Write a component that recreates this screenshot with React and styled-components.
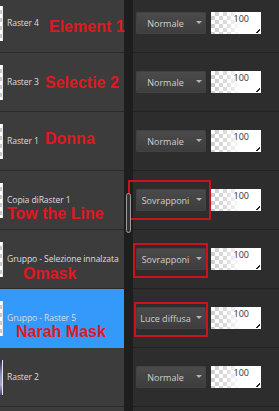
import styled, { createGlobalStyle } from "styled-components";

const GlobalStyle = createGlobalStyle`
  html, body {
    margin: 0;
    padding: 0;
    background: #2d2d2d;
  }
`;

const layers = [
  { name: "Raster 4", mode: "Normale", note: { text: "Element 1", left: 49, top: 25 } },
  { name: "Raster 3", mode: "Normale", note: { text: "Selectie 2", left: 45, top: 22 } },
  { name: "Raster 1", mode: "Normale", note: { text: "Donna", left: 45, top: 19 } },
  {
    name: "Copia diRaster 1",
    mode: "Sovrapponi",
    note: { text: "Tow the Line", left: 7, top: 35 },
    box: { left: 128, top: 9, width: 83, height: 40 },
  },
  {
    name: "Gruppo - Selezione innalzata",
    mode: "Sovrapponi",
    note: { text: "Omask", left: 23, top: 36 },
    box: { left: 133, top: 13, width: 75, height: 35 },
  },
  {
    name: "Gruppo - Raster 5",
    mode: "Luce diffusa",
    selected: true,
    note: { text: "Narah Mask", left: 16, top: 35 },
    box: { left: 134, top: 13, width: 74, height: 35 },
  },
  { name: "Raster 2", mode: "Normale", image: true },
];

const Panel = styled.div`
  position: relative;
  width: 279px;
  height: 411px;
  overflow: hidden;
  background: #2d2d2d;
`;

const List = styled.div`
  display: flex;
  flex-direction: column;
  margin-top: -6px;
`;

const Row = styled.div`
  position: relative;
  display: grid;
  grid-template-columns: 124px 9px 1fr;
  height: ${(p) => (p.$stub ? 10 : 59)}px;
`;

const NameCell = styled.div`
  display: flex;
  align-items: center;
  gap: 3px;
  background: ${(p) => (p.$selected ? "#3399fb" : "#3c3c3c")};
  border-bottom: 1px solid ${(p) => (p.$selected ? "#3399fb" : "#2a2a2a")};
  overflow: hidden;
`;

const Thumb = styled.div`
  flex: none;
  width: 3px;
  height: 35px;
  background: ${(p) =>
    p.$image
      ? "linear-gradient(180deg, #2c2a4a 0%, #8d8cc0 40%, #a9a8d4 70%, #4b4970 100%)"
      : "repeating-linear-gradient(180deg, #ffffff 0 4px, #c9c9c9 4px 8px)"};
  border-right: 1px solid #e8e8e8;
  margin-left: -1px;
`;

const LayerName = styled.span`
  font-family: "Open Sans", "Noto Sans", sans-serif;
  font-size: 8.6px;
  letter-spacing: -0.1px;
  color: #dcdcdc;
  white-space: nowrap;
  margin-left: 1px;
`;

const Gutter = styled.div`
  background: #1e1e1e;
`;

const Controls = styled.div`
  display: flex;
  align-items: center;
  gap: 5px;
  padding-left: 3px;
  background: #2d2d2d;
  border-bottom: 1px solid #222222;
`;

const Blend = styled.div`
  position: relative;
  width: 70px;
  height: 22px;
  box-sizing: border-box;
  padding-right: 11px;
  display: flex;
  align-items: center;
  justify-content: center;
  background: linear-gradient(180deg, #4b4b4b 0%, #444444 50%, #3d3d3d 100%);
  border-radius: 2px;
  box-shadow: inset 0 0 0 1px #424242;
  font-family: "Open Sans", "Noto Sans", sans-serif;
  font-size: 9px;
  color: #cfcfcf;
  white-space: nowrap;
`;

const Caret = styled.span`
  position: absolute;
  right: 4px;
  top: 9px;
  width: 0;
  height: 0;
  border-left: 3px solid transparent;
  border-right: 3px solid transparent;
  border-top: 3px solid #b5b5b5;
`;

const Opacity = styled.div`
  position: relative;
  width: 50px;
  height: 22px;
  box-sizing: border-box;
  padding: 2px 12px 0 0;
  text-align: right;
  background:
    linear-gradient(90deg, rgba(255, 255, 255, 0) 0%, rgba(255, 255, 255, 0.3) 30%, #ffffff 60%),
    repeating-conic-gradient(#cdcdcd 0 25%, #ffffff 0 50%) 0 0 / 8px 8px;
  font-family: "Open Sans", "Noto Sans", sans-serif;
  font-size: 9px;
  line-height: 10px;
  color: #333333;
`;

const Grip = styled.span`
  position: absolute;
  right: 1px;
  bottom: 1px;
  width: 4px;
  height: 4px;
  background: linear-gradient(135deg, transparent 45%, #222 45%, #222 65%, transparent 65%);
`;

const Note = styled.span`
  position: absolute;
  left: ${(p) => p.$left}px;
  top: ${(p) => p.$top}px;
  font-family: "Liberation Sans", Arial, sans-serif;
  font-weight: bold;
  font-size: 16px;
  line-height: 16px;
  color: #e01820;
  white-space: nowrap;
`;

const Frame = styled.div`
  position: absolute;
  left: ${(p) => p.$left}px;
  top: ${(p) => p.$top}px;
  width: ${(p) => p.$width}px;
  height: ${(p) => p.$height}px;
  box-sizing: border-box;
  border: 2px solid #c8141c;
`;

const ScrollThumb = styled.div`
  position: absolute;
  left: 126px;
  top: 193px;
  width: 5px;
  height: 40px;
  box-sizing: border-box;
  border: 1px solid #9c9c9c;
  border-radius: 3px;
  background: #343434;
`;

export default function App() {
  return (
    <>
      <GlobalStyle />
      <Panel>
        <List>
          {layers.map((layer, i) => (
            <Row key={i}>
              <NameCell $selected={layer.selected}>
                <Thumb $image={layer.image} />
                <LayerName>{layer.name}</LayerName>
              </NameCell>
              <Gutter />
              <Controls>
                <Blend>
                  {layer.mode}
                  <Caret />
                </Blend>
                <Opacity>
                  100
                  <Grip />
                </Opacity>
              </Controls>
              {layer.note && (
                <Note $left={layer.note.left} $top={layer.note.top}>
                  {layer.note.text}
                </Note>
              )}
              {layer.box && (
                <Frame
                  $left={layer.box.left}
                  $top={layer.box.top}
                  $width={layer.box.width}
                  $height={layer.box.height}
                />
              )}
            </Row>
          ))}
          <Row $stub>
            <NameCell />
            <Gutter />
            <Controls />
          </Row>
        </List>
        <ScrollThumb />
      </Panel>
    </>
  );
}
